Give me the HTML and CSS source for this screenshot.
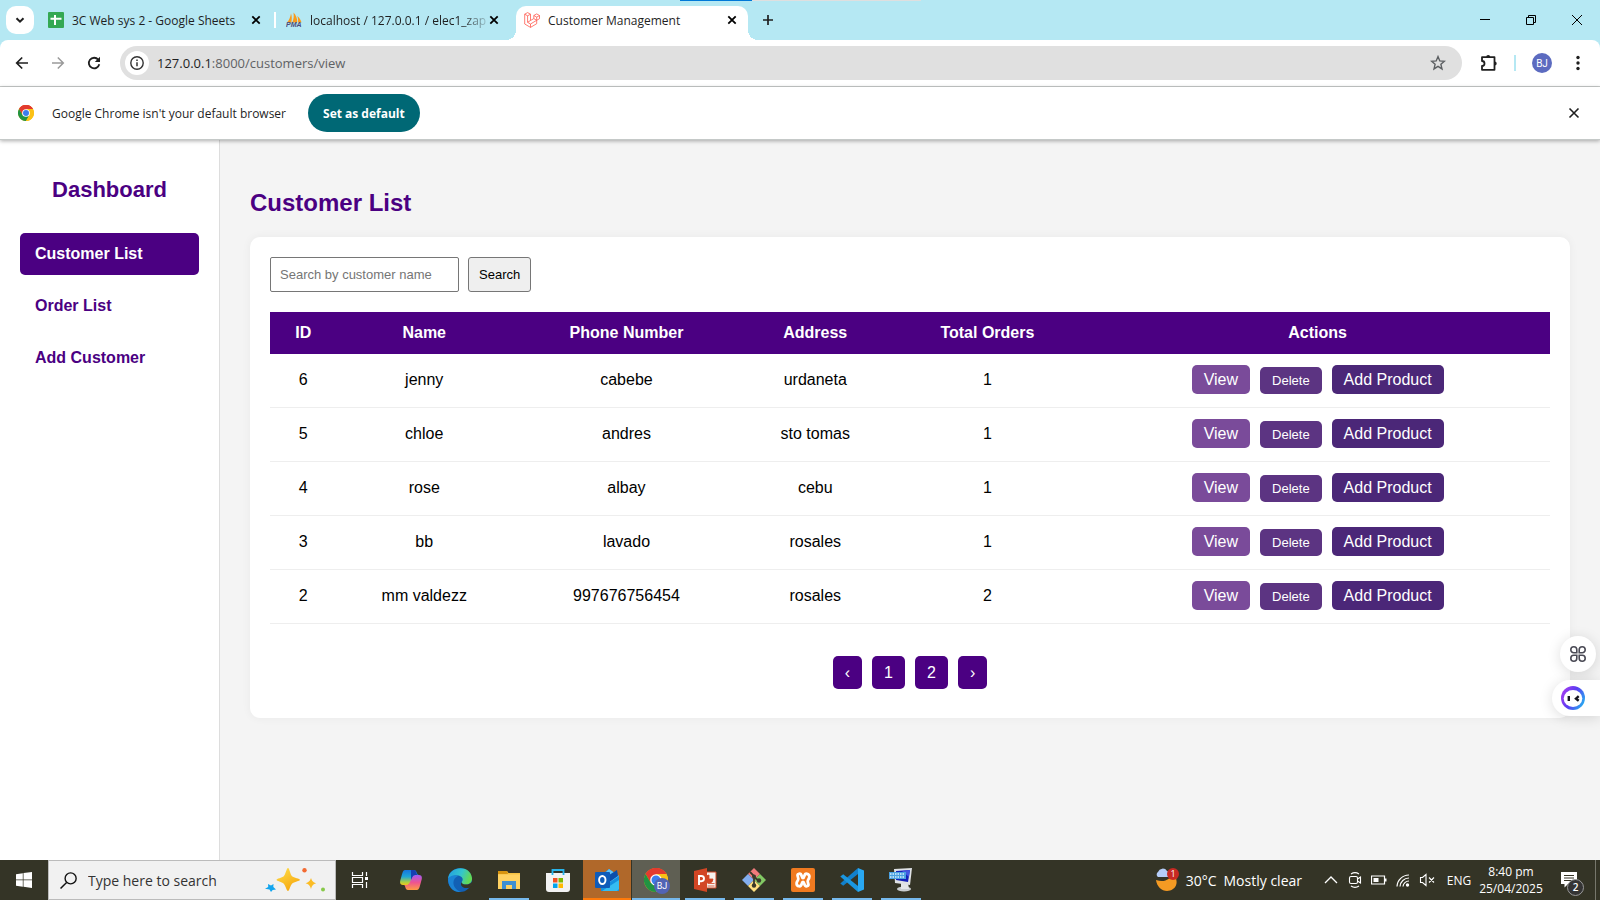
FILE: index.html
```html
<!DOCTYPE html>
<html lang="en">
<head>
<meta charset="utf-8">
<title>Customer Management</title>
<link rel="stylesheet" href="styles.css">
</head>
<body>
<svg class="defs" aria-hidden="true">
  <symbol id="x" viewBox="0 0 16 16"><path d="M4.3 4.3l7.4 7.4M11.7 4.3l-7.4 7.4" fill="none" stroke="currentColor" stroke-width="1.8"/></symbol>
  <symbol id="chrome" viewBox="0 0 24 24">
    <circle cx="12" cy="12" r="12" fill="#fbc116"/>
    <path d="M12 12L1.6 6A12 12 0 0 1 22.4 6z" fill="#e33b2e"/>
    <path d="M12 6h10.4A12 12 0 0 0 1.6 6L6.8 15z" fill="#e33b2e"/>
    <path d="M1.6 6A12 12 0 0 0 12 24l5.2-9H6.8z" fill="#229342"/>
    <path d="M12 6h10.4A12 12 0 0 1 12 24l5.2-9z" fill="#fbc116"/>
    <circle cx="12" cy="12" r="5.8" fill="#fff"/><circle cx="12" cy="12" r="4.5" fill="#3b7ded"/>
  </symbol>
</svg>

<header class="browser">
  <div class="progress"><span></span></div>
  <div class="tabstrip">
    <button class="tab-search" aria-label="Search tabs"><svg viewBox="0 0 16 16"><path d="M4.5 6.2L8 9.7l3.5-3.5" fill="none" stroke="#1f1f1f" stroke-width="2"/></svg></button>
    <div class="tab">
      <svg class="favicon" viewBox="0 0 16 16"><rect width="16" height="16" rx="1" fill="#34a853"/><path d="M7 3v10M2.5 6.8h11" stroke="#fff" stroke-width="2"/></svg>
      <span class="tab-title">3C Web sys 2 - Google Sheets</span>
      <button class="close" aria-label="Close tab"><svg viewBox="0 0 16 16"><use href="#x"/></svg></button>
    </div>
    <div class="divider"></div>
    <div class="tab">
      <svg class="favicon" viewBox="0 0 16 16"><path d="M1 10.5C3 8.500 4.500 5 5 1.500c1 3 1 6 .3 9zM6.300 10.500C7.800 7.500 8 3.500 7.500.5c2.500 2.500 3.800 6 3.800 10zM12 10.500c.3-2.500 0-4.500-.7-6.500 2 1.500 3.700 4 4.200 6.500z" fill="#f99b1c"/><text class="pma" x="0" y="15">PMA</text></svg>
      <span class="tab-title fade">localhost / 127.0.0.1 / elec1_zap</span>
      <button class="close" aria-label="Close tab"><svg viewBox="0 0 16 16"><use href="#x"/></svg></button>
    </div>
    <div class="tab active">
      <svg class="favicon" viewBox="0 0 16 16"><path d="M.7 2.200L3.600.600l2.900 1.600v6.300l3.300-1.900V3.500l2.900-1.600 2.800 1.600v3.200l-2.800 1.600v3.400L6.500 15.400.7 12zM.7 2.200l2.900 1.600 2.900-1.600M3.600 3.800v6.500l2.900-1.800M3.600 10.300l2.900 1.700 6.200-3.700-2.900-1.700M6.500 12v3.400M9.800 3.500l2.900 1.600 2.800-1.600M12.700 5.100v3.200" fill="none" stroke="#ff5a4f" stroke-width=".8" stroke-linejoin="round"/></svg>
      <span class="tab-title">Customer Management</span>
      <button class="close" aria-label="Close tab"><svg viewBox="0 0 16 16"><use href="#x"/></svg></button>
    </div>
    <button class="new-tab" aria-label="New tab"><svg viewBox="0 0 16 16"><path d="M8 3v10M3 8h10" stroke="#1f1f1f" stroke-width="1.700"/></svg></button>
    <div class="window-controls">
      <button aria-label="Minimize"><svg viewBox="0 0 12 12"><path d="M1 5.500h10" stroke="#000"/></svg></button>
      <button aria-label="Restore"><svg viewBox="0 0 12 12"><path d="M1.500 3.500h7v7h-7zM3.500 3.500v-2h7v7h-2" fill="none" stroke="#000"/></svg></button>
      <button aria-label="Close"><svg viewBox="0 0 12 12"><path d="M1 1l10 10M11 1L1 11" stroke="#000"/></svg></button>
    </div>
  </div>

  <div class="toolbar">
    <button class="nav" aria-label="Back"><svg viewBox="0 0 16 16"><path d="M14 8H3M8.200 2.500L2.700 8l5.500 5.500" fill="none" stroke="#1f1f1f" stroke-width="1.700"/></svg></button>
    <button class="nav" aria-label="Forward"><svg viewBox="0 0 16 16"><path d="M2 8h11M7.800 2.500L13.300 8l-5.500 5.500" fill="none" stroke="#9a9a9a" stroke-width="1.500"/></svg></button>
    <button class="nav" aria-label="Reload"><svg viewBox="0 0 16 16"><path d="M13.300 9.300A5.300 5.300 0 1 1 12.200 4.600L13.500 6" fill="none" stroke="#1f1f1f" stroke-width="1.800"/><path d="M14 1.800V7H8.800z" fill="#1f1f1f"/></svg></button>
    <div class="omnibox">
      <button class="site-info" aria-label="View site information"><svg viewBox="0 0 16 16"><circle cx="8" cy="8" r="6.200" fill="none" stroke="#333" stroke-width="1.400"/><path d="M8 7.200v4M8 4.600v1.500" stroke="#333" stroke-width="1.500"/></svg></button>
      <div class="url" role="textbox" aria-label="Address">127.0.0.1<span>:8000/customers/view</span></div>
      <button class="star" aria-label="Bookmark"><svg viewBox="0 0 16 16"><path d="M8 1.600l1.800 4.300 4.600.4-3.500 3 1.100 4.600L8 11.400l-4 2.500 1.100-4.600-3.500-3 4.600-.4z" fill="none" stroke="#5c5f62" stroke-width="1.400"/></svg></button>
    </div>
    <button class="extensions" aria-label="Extensions"><svg viewBox="0 0 18 18"><path d="M2 3.200h12.500v12.600H2V12a2.400 2.400 0 0 0 0-5z" fill="none" stroke="#1f1f1f" stroke-width="1.800" stroke-linejoin="round"/><path d="M6.200 3a2 2 0 0 1 4 0zM14.700 7.500a2 2 0 0 1 0 4z" fill="#1f1f1f"/></svg></button>
    <div class="divider"></div>
    <button class="avatar" aria-label="Profile">BJ</button>
    <button class="more" aria-label="Menu"><svg viewBox="0 0 16 16" fill="#1f1f1f"><circle cx="8" cy="2.500" r="1.700"/><circle cx="8" cy="8" r="1.700"/><circle cx="8" cy="13.500" r="1.700"/></svg></button>
  </div>

  <div class="infobar">
    <svg class="logo"><use href="#chrome"/></svg>
    <span>Google Chrome isn't your default browser</span>
    <button class="default-btn">Set as default</button>
    <button class="close" aria-label="Dismiss"><svg viewBox="0 0 16 16"><path d="M3.500 3.500l9 9M12.500 3.500l-9 9" stroke="#1f1f1f" stroke-width="1.600"/></svg></button>
  </div>
</header>

<div class="page">
  <aside class="sidebar">
    <h2>Dashboard</h2>
    <nav>
      <a class="current" href="#">Customer List</a>
      <a href="#">Order List</a>
      <a href="#">Add Customer</a>
    </nav>
  </aside>
  <main class="content">
    <h1>Customer List</h1>
    <section class="card">
      <form class="search">
        <input type="text" placeholder="Search by customer name" aria-label="Search by customer name">
        <button type="button">Search</button>
      </form>
      <table>
        <colgroup><col class="c-id"><col class="c-name"><col class="c-phone"><col class="c-address"><col class="c-total"><col></colgroup>
        <thead><tr><th>ID</th><th>Name</th><th>Phone Number</th><th>Address</th><th>Total Orders</th><th>Actions</th></tr></thead>
        <tbody>
          <tr><td>6</td><td>jenny</td><td>cabebe</td><td>urdaneta</td><td>1</td><td><div class="actions"><a class="view" href="#">View</a><button class="delete">Delete</button><a class="add" href="#">Add Product</a></div></td></tr>
          <tr><td>5</td><td>chloe</td><td>andres</td><td>sto tomas</td><td>1</td><td><div class="actions"><a class="view" href="#">View</a><button class="delete">Delete</button><a class="add" href="#">Add Product</a></div></td></tr>
          <tr><td>4</td><td>rose</td><td>albay</td><td>cebu</td><td>1</td><td><div class="actions"><a class="view" href="#">View</a><button class="delete">Delete</button><a class="add" href="#">Add Product</a></div></td></tr>
          <tr><td>3</td><td>bb</td><td>lavado</td><td>rosales</td><td>1</td><td><div class="actions"><a class="view" href="#">View</a><button class="delete">Delete</button><a class="add" href="#">Add Product</a></div></td></tr>
          <tr><td>2</td><td>mm valdezz</td><td>997676756454</td><td>rosales</td><td>2</td><td><div class="actions"><a class="view" href="#">View</a><button class="delete">Delete</button><a class="add" href="#">Add Product</a></div></td></tr>
        </tbody>
      </table>
      <nav class="pagination" aria-label="Pages"><a href="#">‹</a><a href="#">1</a><a href="#">2</a><a href="#">›</a></nav>
    </section>
  </main>
  <div class="floating">
    <button class="apps" aria-label="Tools"><svg viewBox="0 0 16 16" fill="none" stroke="#4a4a55" stroke-width="1.600"><path d="M6.800 6.800H3.800a3 3 0 1 1 3-3zM9.200 6.800h3a3 3 0 1 0-3-3zM6.800 9.200H3.800a3 3 0 1 0 3 3zM9.200 9.200h3a3 3 0 1 1-3 3z"/></svg></button>
    <button class="assistant" aria-label="Assistant"><svg viewBox="0 0 24 24"><defs><linearGradient id="ring" x1="0" y1=".3" x2="1" y2=".8"><stop offset="0" stop-color="#a33df0"/><stop offset=".45" stop-color="#5a3cf2"/><stop offset="1" stop-color="#22b8f0"/></linearGradient></defs><circle cx="12" cy="12" r="12" fill="url(#ring)"/><ellipse cx="12" cy="12.500" rx="9.300" ry="8.500" fill="#fff"/><path d="M7.800 10v5M17.700 10.200L15 12.600l2.700 2.200" fill="none" stroke="#15151f" stroke-width="2.400"/></svg></button>
  </div>
</div>

<footer class="taskbar">
  <button class="start" aria-label="Start"><svg viewBox="0 0 16 16" fill="#fff"><path d="M0 2.200l6.800-1v6.400H0zM7.500 1.100L16 0v7.600H7.500zM0 8.300h6.800v6.500L0 13.800zM7.500 8.300H16V16l-8.500-1.200z"/></svg></button>
  <label class="task-search">
    <svg class="lens" viewBox="0 0 16 16"><circle cx="10" cy="6" r="5.200" fill="none" stroke="#111" stroke-width="1.300"/><path d="M6.200 9.800L.5 15.500" stroke="#111" stroke-width="1.400"/></svg>
    <input type="text" placeholder="Type here to search" aria-label="Type here to search">
    <svg class="sparkles" viewBox="0 0 60 24"><defs><linearGradient id="gold" x2=".6" y2="1"><stop stop-color="#ffe04c"/><stop offset="1" stop-color="#f6a80f"/></linearGradient></defs><path d="M23 0c1.500 0 2.200 6.500 4 8.200s8 2.300 8 3.600-6 2-8 4-2.500 7.200-4 7.200-2.300-5.200-4.200-7.200-7.300-2.700-7.300-4 5.500-1.900 7.300-3.600S21.500 0 23 0z" fill="url(#gold)"/><path d="M46 10c.8 2 1.200 4 5.200 5.200-4 1.300-4.500 3.300-5.200 5.800-.7-2.500-1.300-4.500-5.400-5.800 4-1.200 4.600-3.200 5.400-5.200z" fill="#fbbc25"/><path d="M3 16l3 1.400 2.500-1.300-.2 3L11 21.500l-3.300.5L6 24l-1.500-2.500L0 20.700 3.200 19z" fill="#13a5ee"/><circle cx="39.500" cy="2.200" r="2.200" fill="#f36a32"/><circle cx="58" cy="21.500" r="2" fill="#87c949"/></svg>
  </label>
  <div class="tasks">
    <button aria-label="Task View"><svg viewBox="0 0 24 24" fill="none" stroke="#fff" stroke-width="1.200"><path d="M4.500 4v3.500h10V4M4.500 20v-3.500h10V20M4.500 9.500h10v5h-10zM18.500 4v4M18.500 14v6"/><path d="M17 9h3v3h-3z" fill="#fff" stroke="none"/></svg></button>
    <button aria-label="Copilot"><svg viewBox="0 0 24 24"><defs><linearGradient id="cp1" x2="0" y2="1"><stop stop-color="#1674df"/><stop offset=".45" stop-color="#20a5d5"/><stop offset=".8" stop-color="#a9cf45"/><stop offset="1" stop-color="#f3c51b"/></linearGradient><linearGradient id="cp2" x2="0" y2="1"><stop stop-color="#a35bf2"/><stop offset=".5" stop-color="#ee5490"/><stop offset="1" stop-color="#ff9b43"/></linearGradient></defs><path d="M6 2h9c3 0 2.500 5 5 5h-3c-4 0-3.500 10-8 10H4c-4 0-3-4-2-7S3.500 2 6 2z" fill="url(#cp1)"/><path d="M18 22H9c-3 0-2.500-5-4-5h3c4 0 3.500-10 8-10h4c4 0 3 4 2 7s-1.500 8-4 8z" fill="url(#cp2)"/><path d="M12 2h3c2.500 0 2 4.500 4 5h-3c-2 0-3 3-4 5z" fill="#173fb1"/></svg></button>
    <button aria-label="Edge"><svg viewBox="0 0 24 24"><defs><linearGradient id="ed" x2="1" y2=".3"><stop stop-color="#219be3"/><stop offset=".6" stop-color="#34c6cc"/><stop offset="1" stop-color="#62d957"/></linearGradient></defs><circle cx="12" cy="12" r="12" fill="#1260b4"/><path d="M0 11C1-2 22-4 24 10c.4 4-2.500 6.500-6 6.500-3.500 0-5-1.500-4-3 2-3-.5-6-5-6-4 0-8 2-9 3.500z" fill="url(#ed)"/><path d="M0 11c2-3.500 7-4.500 10-3-7 3-6 13 3 15.900C5 25 0 18 0 11z" fill="#1b83d4"/><path d="M14 13.500c-1 1.500.5 3 4 3 2 0 4-.5 6-2.500v4l-2 1.500c-7 2-11-2-8-6z" fill="#373526"/></svg></button>
    <button class="open" aria-label="File Explorer"><svg viewBox="0 0 24 24"><path d="M1 3h9l1.500 2H23v16H1z" fill="#f5c244"/><path d="M1 3h9l1 3H1z" fill="#d89510"/><path d="M1 6.500h22V21H1z" fill="#ffd262"/><path d="M5 13h14v8h-4v-4H9v4H5z" fill="#3e8fd2"/></svg></button>
    <button aria-label="Microsoft Store"><svg viewBox="0 0 24 24"><path d="M0 5h24v16a3 3 0 0 1-3 3H3a3 3 0 0 1-3-3z" fill="#f2f2f2"/><path d="M6.500 7V2h11v5" fill="none" stroke="#28b4ea" stroke-width="1.800"/><path d="M7 10h4.500v4.500H7z" fill="#f25022"/><path d="M12.500 10H17v4.500h-4.500z" fill="#7fba00"/><path d="M7 15.500h4.500V20H7z" fill="#00a4ef"/><path d="M12.500 15.500H17V20h-4.500z" fill="#ffb900"/></svg></button>
    <button class="alert" aria-label="Outlook"><svg viewBox="0 0 24 24"><path d="M5 8l9-7 10 7v15H6z" fill="#1490df"/><path d="M14 1l10 7-9 6-8-6z" fill="#62c4fa"/><path d="M11 9l11-7 1 6-10 7z" fill="#0b4eaa"/><path d="M24 9v12l-2 2H7l17-11z" fill="#35bdf2"/><rect y="4" width="15" height="16" rx="1" fill="#0f5bb9"/><ellipse cx="7.300" cy="12" rx="3.200" ry="4" fill="none" stroke="#fff" stroke-width="1.900"/></svg></button>
    <button class="focused" aria-label="Google Chrome"><svg viewBox="0 0 24 24"><use href="#chrome"/></svg><span class="mini-avatar">BJ</span></button>
    <button class="open" aria-label="PowerPoint"><svg viewBox="0 0 24 24"><path d="M13 4h10v16H13z" fill="#f5f1ee" stroke="#d24625"/><path d="M16 7v4h4a4 4 0 1 1-4-4zM14.500 15.500h7M14.500 18h7" fill="#d24625" stroke="#d24625" stroke-width=".8"/><path d="M1 3l13-3v24L1 21z" fill="#d24625"/><path d="M6 17V8h2.400a2.300 2.300 0 0 1 0 5.200H6" fill="none" stroke="#fff" stroke-width="1.900"/></svg></button>
    <button class="open" aria-label="Git Bash"><svg viewBox="0 0 24 24"><path d="M12 0l6 6-6 6-6-6z" fill="#f07b7b"/><path d="M6 6l6 6-6 6-6-6z" fill="#83aef0"/><path d="M18 6l6 6-6 6-6-6z" fill="#82c864"/><path d="M12 12l6 6-6 6-6-6z" fill="#ffe182"/><path d="M8 4l4 4v10M12 9l5 4" fill="none" stroke="#393a2b" stroke-width="1.800"/><circle cx="12" cy="8.500" r="2" fill="#393a2b"/><circle cx="12" cy="17.500" r="2.200" fill="#393a2b"/><circle cx="17" cy="12.500" r="2.200" fill="#393a2b"/></svg></button>
    <button class="open" aria-label="XAMPP"><svg viewBox="0 0 24 24"><rect width="24" height="24" rx="2" fill="#f07a20"/><path d="M8 5.800c3.500-.8 2 4.200 4 4.200s.5-5 4-4.200 2.500 4 1 6.200 2.500 5.500-1 6.200-2-4.200-4-4.200-.5 5-4 4.200-2.500-4-1-6.200-2.500-5.400 1-6.200z" fill="none" stroke="#fff" stroke-width="2.800" stroke-linejoin="round"/></svg></button>
    <button class="open" aria-label="Visual Studio Code"><svg viewBox="0 0 24 24"><path d="M18 0l6 2.500v19L18 24z" fill="#29a8f2"/><path d="M18 0v6L3.200 17.800.3 15.600z" fill="#1180cc"/><path d="M18 24v-6L3.200 6.200.3 8.400z" fill="#1a96e0"/></svg></button>
    <button class="open" aria-label="Remote display"><svg viewBox="0 0 24 24"><ellipse cx="15" cy="21" rx="7" ry="2.500" fill="#c9cdd0"/><path d="M12 15h7l1 6h-8z" fill="#e4e6e8"/><path d="M5 1l18-1-2 17-15-2z" fill="#dfe2e5"/><path d="M7 3l14-1-2 12-12-2z" fill="#1420b8"/><path d="M13 3l8-1-1 7z" fill="#4256e0"/><rect x="0" y="4" width="17" height="7" fill="#4aa0e0"/><path d="M1 6h15M1 9h15" stroke="#d9effc" stroke-width="1.400" stroke-dasharray="1.500 1"/></svg></button>
  </div>
  <div class="tray">
    <button class="weather"><svg viewBox="0 0 24 24"><path d="M1 12c9 3 14-1 16-6 6 3 6 12 1 15C11 26 2 21 1 12z" fill="#f49a23"/><path d="M3 9a3 3 0 0 1 0-5 5 5 0 0 1 9-1c3 1 3 6 0 6z" fill="#b5cdf8"/><circle cx="18" cy="6" r="6" fill="#c72a23"/><text class="count" x="18" y="9">1</text></svg><span>30°C</span><span>Mostly clear</span></button>
    <button class="tray-icon" aria-label="Show hidden icons"><svg viewBox="0 0 16 16"><path d="M2 11l6-6 6 6" fill="none" stroke="#fff" stroke-width="1.300"/></svg></button>
    <button class="tray-icon" aria-label="Meet now"><svg viewBox="0 0 16 16" fill="none" stroke="#fff" stroke-width="1.100"><rect x="2.500" y="4.500" width="8" height="7" rx="1.500"/><path d="M10.500 7l3-2v6l-3-2M4 2c3-2 5-2 8 0M4 14c3 2 5 2 8 0"/></svg></button>
    <button class="tray-icon" aria-label="Battery"><svg viewBox="0 0 16 16"><path d="M.5 4h13v8H.5z" fill="none" stroke="#fff" stroke-width="1.200"/><path d="M2.500 6h5v4h-5zM14 6.500h1.500v3H14z" fill="#fff"/></svg></button>
    <button class="tray-icon" aria-label="Network"><svg viewBox="0 0 16 16" fill="none" stroke="#fff"><path d="M2 14.500A12 12 0 0 1 14 3M5 14.500a9 9 0 0 1 9-8.500M8 14.500A6 6 0 0 1 14 9" stroke-width="1.200"/><circle cx="12.500" cy="13" r="1.700" fill="#fff" stroke="none"/></svg></button>
    <button class="tray-icon" aria-label="Volume muted"><svg viewBox="0 0 16 16" fill="none" stroke="#fff" stroke-width="1.100"><path d="M1.500 5.500h2l3.500-3v11l-3.500-3h-2zM10 5.500l5 5M15 5.500l-5 5"/></svg></button>
    <button class="lang">ENG</button>
    <button class="clock"><span>8:40 pm</span><span>25/04/2025</span></button>
    <button class="notifications" aria-label="Notifications"><svg viewBox="0 0 16 16"><path d="M0 0h16v12H7l-3.500 3.500V12H0z" fill="#fff"/><path d="M3 3.500h10M3 6h10M3 8.500h8" stroke="#373526"/></svg><span class="badge">2</span></button>
    <div class="show-desktop"></div>
  </div>
</footer>
</body>
</html>
```

FILE: styles.css
```css
* { box-sizing: border-box; }

body {
  margin: 0;
  height: 100vh;
  display: flex;
  flex-direction: column;
  font-family: "Liberation Sans", Arial, sans-serif;
  font-size: 16px;
  color: #000;
  overflow: hidden;
}

button { font-family: inherit; cursor: pointer; }
a { text-decoration: none; }
svg { display: block; flex: none; }
.defs { position: absolute; width: 0; height: 0; }

/* Browser chrome */
.browser {
  position: relative;
  z-index: 2;
  flex: none;
  background: #b5e8f3;
  font-family: "Open Sans", "Noto Sans", sans-serif;
  font-size: 12px;
  color: #1f1f1f;
}
.browser button { border: 0; padding: 0; background: none; display: grid; place-items: center; flex: none; }
.progress { position: absolute; top: 0; left: 680px; width: 241px; height: 1px; background: #dfdfdf; }
.progress span { display: block; width: 30%; height: 1px; background: #0078d7; }

.tabstrip { display: flex; align-items: center; height: 40px; padding-left: 6px; }
.browser .tab-search { width: 28px; height: 28px; margin-right: 6px; border-radius: 10px; background: #fff; }
.tab-search svg, .close svg, .new-tab svg { width: 16px; height: 16px; }
.tab { display: flex; align-items: center; width: 232px; height: 34px; padding: 0 8px 6px; align-self: flex-end; }
.tab .favicon { width: 16px; height: 16px; margin-right: 8px; }
.tab-title { flex: 1; white-space: nowrap; }
.fade { -webkit-mask-image: linear-gradient(90deg, #000 86%, #0003); mask-image: linear-gradient(90deg, #000 86%, #0003); }
.pma { font: italic bold 7px "Liberation Sans", sans-serif; fill: #4b4a7a; }
.tabstrip .divider { width: 2px; height: 16px; margin: 0 2px; background: #fff; }
.tab.active { position: relative; margin-left: 6px; background: #fff; border-radius: 10px 10px 0 0; }
.tab.active::before, .tab.active::after { content: ""; position: absolute; bottom: 0; width: 10px; height: 10px; }
.tab.active::before { right: 100%; background: radial-gradient(circle at 0 0, transparent 10px, #fff 10px); }
.tab.active::after { left: 100%; background: radial-gradient(circle at 100% 0, transparent 10px, #fff 10px); }
.new-tab { margin-left: 12px; }
.window-controls { display: flex; margin-left: auto; }
.window-controls button { width: 46px; height: 40px; }
.window-controls svg { width: 12px; height: 12px; }

.toolbar {
  display: flex;
  align-items: center;
  height: 47px;
  padding: 0 14px;
  background: #fff;
  border-bottom: 1px solid #c9cccb;
  border-radius: 8px 8px 0 0;
}
.nav { margin-right: 20px; }
.nav svg, .star svg, .site-info svg, .more svg { width: 16px; height: 16px; }
.browser .nav:nth-child(3) { margin-right: 18px; }
.omnibox { flex: 1; display: flex; align-items: center; height: 34px; padding: 0 16px 0 5px; border-radius: 17px; background: #e0e0e0; }
.browser .site-info { width: 24px; height: 24px; border-radius: 50%; background: #fff; }
.url { flex: 1; margin-left: 8px; font-size: 13px; }
.url span { color: #5f6265; }
.extensions { margin: 0 16px 0 18px; }
.extensions svg { width: 18px; height: 18px; }
.toolbar .divider { width: 2px; height: 16px; background: #b5e8f3; }
.browser .avatar { width: 20px; height: 20px; margin: 0 18px 0 16px; border-radius: 50%; background: #5c6bc0; color: #fff; font: 10px Roboto, sans-serif; }

.infobar { display: flex; align-items: center; height: 53px; padding: 0 18px; background: #fff; border-bottom: 1px solid #c5c9c8; box-shadow: 0 1px 4px #0005; font-size: 12px; }
.logo { width: 16px; height: 16px; margin-right: 18px; }
.browser .default-btn { height: 38px; margin-left: 22px; padding: 0 15px; border-radius: 19px; background: #006875; color: #fff; font-size: 12px; font-weight: 700; }
.infobar .close { margin-left: auto; }

/* Page */
.page { position: relative; flex: 1; min-height: 0; display: flex; background: #f4f4f4; }
.sidebar { flex: none; width: 220px; padding: 36px 20px 20px; background: #fff; border-right: 1px solid #ddd; }
.sidebar h2 { margin: 0 0 29px; font-size: 22px; line-height: 28px; text-align: center; color: #4b0082; }
.sidebar nav { display: grid; gap: 10px; }
.sidebar a { padding: 12px 15px; border-radius: 5px; font-weight: 700; line-height: 18px; color: #4b0082; }
.sidebar .current { background: #4b0082; color: #fff; }

.content { flex: 1; min-width: 0; padding: 50px 30px 30px; }
.content h1 { margin: 0 0 22px; font-size: 24px; line-height: 25px; color: #4b0082; }
.card { padding: 20px 20px 29px; border-radius: 10px; background: #fff; box-shadow: 0 0 10px #0000000d; }
.search { display: flex; gap: 9px; margin-bottom: 20px; }
.search input { width: 189px; height: 35px; padding: 8px 9px; border: 1px solid #767676; border-radius: 2px; font: 13px "Liberation Sans", Arial, sans-serif; }
.search input::placeholder { color: #757575; }
.search button { height: 35px; padding: 0 10px; border: 1px solid #767676; border-radius: 3px; background: #efefef; font-size: 13px; color: #000; }

table { width: 100%; table-layout: fixed; border-collapse: separate; border-spacing: 0; text-align: center; }
.c-id { width: 5.2%; }
.c-name { width: 13.7%; }
.c-phone { width: 17.9%; }
.c-address { width: 11.6%; }
.c-total { width: 15.3%; }
th { height: 42px; padding: 0; background: #4b0082; color: #fff; }
td { height: 54px; padding: 0 0 1px; border-bottom: 1px solid #eee; }
.actions { display: flex; justify-content: center; align-items: flex-end; gap: 10px; margin-bottom: 2px; }
.actions a, .actions button { padding: 6px 12px; border: 0; border-radius: 5px; color: #fff; line-height: 17px; }
.actions button { font-size: 13px; line-height: 15px; }
.actions .view { background: #7a4b9a; }
.actions .delete { background: #5c3482; }
.actions .add { background: #4b2778; }

.pagination { display: flex; justify-content: center; gap: 10px; margin-top: 32px; }
.pagination a { padding: 8px 12px; border-radius: 5px; background: #4b0082; color: #fff; line-height: 17px; }

.floating { position: absolute; right: 0; bottom: 144px; display: flex; flex-direction: column; align-items: flex-end; gap: 8px; }
.floating button { display: grid; place-items: center; height: 36px; padding: 0; border: 0; background: #fff; box-shadow: 0 2px 14px #0002; }
.apps { width: 36px; margin-right: 4px; border-radius: 50%; }
.apps svg { width: 16px; height: 16px; }
.floating .assistant { width: 48px; padding-right: 6px; border-radius: 18px 0 0 18px; }
.assistant svg { width: 24px; height: 24px; }

/* Taskbar */
.taskbar { position: relative; flex: none; display: flex; height: 40px; background: #343426; color: #fff; font-family: "Open Sans", "Noto Sans", sans-serif; }
.taskbar button { border: 0; padding: 0; background: none; color: inherit; }
.taskbar .start { width: 48px; display: grid; place-items: center; }
.start svg { width: 16px; height: 16px; }
.task-search { display: flex; align-items: center; width: 288px; padding: 0 10px 0 11px; border: 1px solid #bbb; background: #f1f1f1; }
.lens { width: 17px; height: 17px; }
.task-search input { flex: 1; min-width: 0; margin-left: 11px; padding: 0; border: 0; background: none; font: 14px "Open Sans", sans-serif; }
.task-search input::placeholder { color: #333; opacity: 1; }
.sparkles { width: 60px; height: 24px; }
.tasks { display: flex; gap: 1px; }
.tasks button { position: relative; display: grid; place-items: center; width: 48px; }
.tasks button:first-child { margin-right: 2px; }
.tasks svg { width: 24px; height: 24px; }
.tasks .open { background: linear-gradient(#76b9ed, #76b9ed) center bottom / 40px 2px no-repeat; }
.tasks .focused { background: #5f5f53; border-bottom: 2px solid #76b9ed; padding-top: 2px; }
.tasks .alert { background: #b0682a; border-bottom: 2px solid #ff7a0a; padding-top: 2px; }
.mini-avatar { position: absolute; right: 10px; bottom: 4px; width: 16px; height: 16px; border-radius: 50%; background: #5264b5; font: 9px/16px Roboto, sans-serif; }

.tray { display: flex; align-items: center; margin-left: auto; }
.tray button { flex: none; height: 40px; }
.weather { display: flex; align-items: center; gap: 7px; margin-right: 17px; font-size: 14px; white-space: nowrap; }
.weather svg { width: 24px; height: 24px; }
.count { font: 9px "Open Sans", sans-serif; fill: #fff; text-anchor: middle; }
.tray-icon { width: 24px; display: grid; place-items: center; }
.tray-icon svg { width: 16px; height: 16px; }
.lang { width: 40px; font-size: 12px; }
.clock { width: 64px; display: grid; align-content: center; justify-items: center; font-size: 12px; line-height: 17px; }
.notifications { position: relative; width: 52px; display: grid; place-items: center; }
.notifications svg { width: 16px; height: 16px; }
.badge { position: absolute; left: 24px; bottom: 4px; width: 17px; height: 17px; border: 1px solid #999; border-radius: 50%; background: #343434; font-size: 10px; line-height: 15px; font-weight: 600; }
.show-desktop { width: 5px; height: 40px; border-left: 1px solid #77776c; }
```
